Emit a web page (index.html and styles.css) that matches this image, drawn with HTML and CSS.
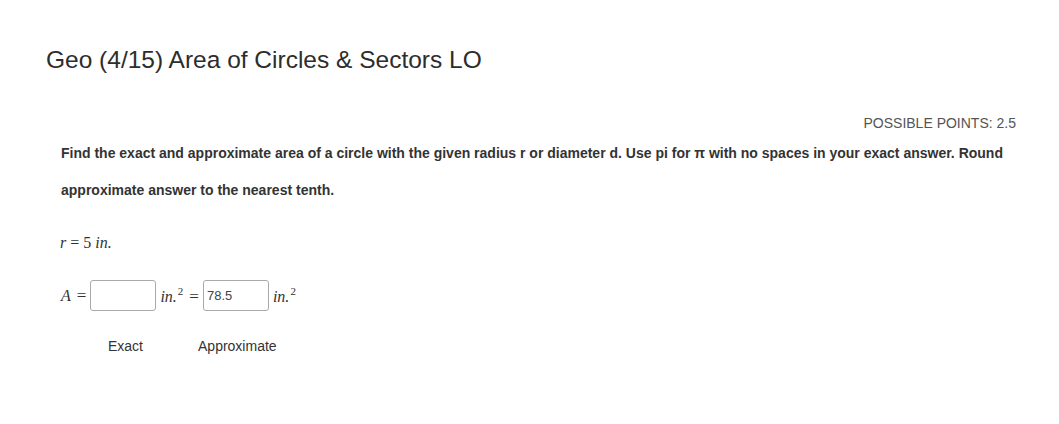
FILE: index.html
```html
<!DOCTYPE html>
<html lang="en-US">
<head>
    <meta charset="UTF-8">
    <meta name="viewport" content="width=device-width, initial-scale=1.0">
    <title>Geo (4/15) Area of Circles &amp; Sectors LO</title>
    <link rel="stylesheet" href="styles.css">
</head>
<body>
    <div class="page">
        <h1 class="title">Geo (4/15) Area of Circles &amp; Sectors LO</h1>

        <div class="points">POSSIBLE POINTS: 2.5</div>

        <div class="question">
            <p class="prompt">Find the exact and approximate area of a circle with the given radius r or diameter d. Use pi for π with no spaces in your exact answer. Round approximate answer to the nearest tenth.</p>

            <div class="given"><i>r</i><span class="op">=</span>5 <i>in.</i></div>

            <div class="answer-row">
                <span class="math"><i>A</i><span class="op">=</span></span>
                <input type="text" class="answer exact">
                <span class="math unit"><i>in.</i><sup>2</sup><span class="op">=</span></span>
                <input type="text" class="answer approx" value="78.5">
                <span class="math unit"><i>in.</i><sup>2</sup></span>
            </div>

            <div class="labels">
                <span class="label-exact">Exact</span>
                <span class="label-approx">Approximate</span>
            </div>
        </div>
    </div>
</body>
</html>
```

FILE: styles.css
```css
:root {
    --primary-font: "Liberation Sans", Arial, Helvetica, sans-serif;
    --math-font: "Liberation Serif", "Times New Roman", serif;
    --text-color: #333;
    --secondary-color: #555;
}

* {
    margin: 0;
    padding: 0;
    box-sizing: border-box;
}

body {
    font-family: var(--primary-font);
    color: var(--text-color);
    background-color: white;
}

.page {
    padding: 45px 43px 0 46px;
}

.title {
    font-size: 24.5px;
    font-weight: normal;
    line-height: 30px;
    color: #2d2d2d;
}

.points {
    text-align: right;
    font-size: 14px;
    color: var(--secondary-color);
    margin-top: 40px;
}

.question {
    padding-left: 15px;
    margin-top: 4px;
}

.prompt {
    font-size: 14px;
    font-weight: bold;
    line-height: 37px;
    color: #333;
    max-width: 960px;
}

.given {
    font-family: var(--math-font);
    font-size: 16px;
    margin-top: 25px;
    margin-left: -1px;
}

.op {
    font-style: normal;
    margin: 0 4px;
}

.answer-row {
    display: flex;
    align-items: center;
    margin-top: 28px;
    font-family: var(--math-font);
    font-size: 16px;
}

.math i {
    font-style: italic;
}

.math .op {
    font-size: 17px;
    margin: 0 4px 0 6px;
}

.unit {
    margin-left: 4px;
}

.unit sup {
    font-size: 11px;
    vertical-align: 7px;
    margin-left: 1px;
}

.answer {
    width: 66px;
    height: 31px;
    border: 1px solid #a9a9a9;
    border-radius: 3px;
    font-family: var(--primary-font);
    font-size: 13px;
    color: #444;
    padding: 0 3px;
    outline: none;
}

.labels {
    display: flex;
    margin-top: 27px;
    font-size: 14px;
    color: var(--text-color);
}

.label-exact {
    margin-left: 47px;
}

.label-approx {
    margin-left: 55px;
}
```
